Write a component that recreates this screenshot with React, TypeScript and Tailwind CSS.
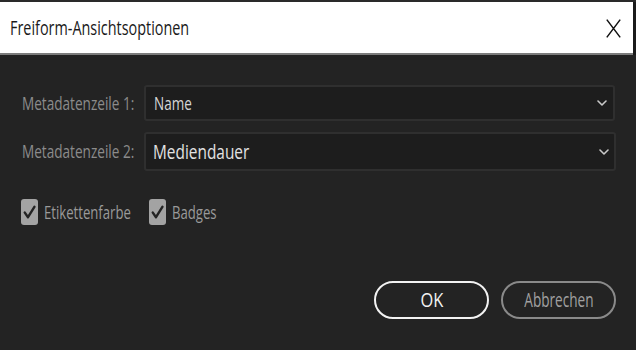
import React from "react";

function Chevron() {
  return (
    <svg width="10" height="6" viewBox="0 0 10 6" className="shrink-0">
      <path d="M1 1 L5 5 L9 1" fill="none" stroke="#c9c9c9" strokeWidth="1.6" strokeLinecap="round" strokeLinejoin="round" />
    </svg>
  );
}

function CheckBox() {
  return (
    <div className="w-[17px] h-[26px] rounded-[3px] bg-[#a3a3a3] flex items-center justify-center shrink-0">
      <svg width="13" height="16" viewBox="0 0 13 16">
        <path d="M1.8 8.6 L5 13.2 L11.4 2.8" fill="none" stroke="#232323" strokeWidth="2.4" strokeLinecap="round" strokeLinejoin="round" />
      </svg>
    </div>
  );
}

function T({ children, className = "" }: { children: React.ReactNode; className?: string }) {
  return <span className={`inline-block origin-left whitespace-nowrap ${className}`}>{children}</span>;
}

export default function App() {
  return (
    <div className="w-[636px] h-[350px] bg-[#232323] flex flex-col overflow-hidden font-['Open_Sans',sans-serif]">
      <div className="h-[2px] bg-[#2a2a2a] shrink-0" />
      <div className="flex h-[53px] shrink-0">
        <div className="flex-1 bg-white border-b-2 border-[#7c7c7c] flex items-center justify-between pl-[10px] pr-[12px]">
          <T className="text-[20px] scale-x-[0.72] text-[#1a1a1a] leading-none">Freiform-Ansichtsoptionen</T>
          <svg width="15" height="19" viewBox="0 0 15 19" className="mt-[2px]">
            <path d="M0.8 0.6 L14.2 18.4 M14.2 0.6 L0.8 18.4" stroke="#111" strokeWidth="1.5" fill="none" />
          </svg>
        </div>
        <div className="w-[3px] bg-[#1b1b1b]" />
      </div>

      <div className="flex flex-col pl-[21px] pt-[30px]">
        <div className="flex items-center h-[36px]">
          <div className="w-[123px] pl-[1px]">
            <T className="text-[18px] scale-x-[0.755] text-[#8b8b8b]">Metadatenzeile 1:</T>
          </div>
          <div className="w-[471px] h-full rounded-[3px] bg-[#1d1d1d] border-2 border-[#2f2f2f] flex items-center justify-between pl-[8px] pr-[6px]">
            <T className="text-[18px] scale-x-[0.75] text-[#d6d6d6]">Name</T>
            <Chevron />
          </div>
        </div>
        <div className="flex items-center h-[39px] mt-[11px]">
          <div className="w-[123px] pl-[1px]">
            <T className="text-[18px] scale-x-[0.755] text-[#8b8b8b]">Metadatenzeile 2:</T>
          </div>
          <div className="w-[472px] h-full rounded-[3px] bg-[#1d1d1d] border-2 border-[#2f2f2f] flex items-center justify-between pl-[7px] pr-[5px]">
            <T className="text-[20px] scale-x-[0.77] text-[#e2e2e2]">Mediendauer</T>
            <Chevron />
          </div>
        </div>

        <div className="flex items-center mt-[28px] h-[26px]">
          <CheckBox />
          <div className="ml-[6px] w-[105px]">
            <T className="text-[17.5px] scale-x-[0.75] text-[#9a9a9a]">Etikettenfarbe</T>
          </div>
          <CheckBox />
          <div className="ml-[6px]">
            <T className="text-[17.5px] scale-x-[0.75] text-[#9a9a9a]">Badges</T>
          </div>
        </div>

        <div className="flex justify-end gap-[12px] mt-[56px] pr-[20px]">
          <div className="w-[115px] h-[38px] rounded-full border-2 border-[#f2f2f2] flex items-center justify-center">
            <span className="inline-block scale-x-[0.82] text-[20px] text-[#f2f2f2] whitespace-nowrap">OK</span>
          </div>
          <div className="w-[115px] h-[38px] rounded-full border-2 border-[#8a8a8a] flex items-center justify-center">
            <span className="inline-block scale-x-[0.68] text-[20px] text-[#a0a0a0] whitespace-nowrap">Abbrechen</span>
          </div>
        </div>
      </div>
    </div>
  );
}
